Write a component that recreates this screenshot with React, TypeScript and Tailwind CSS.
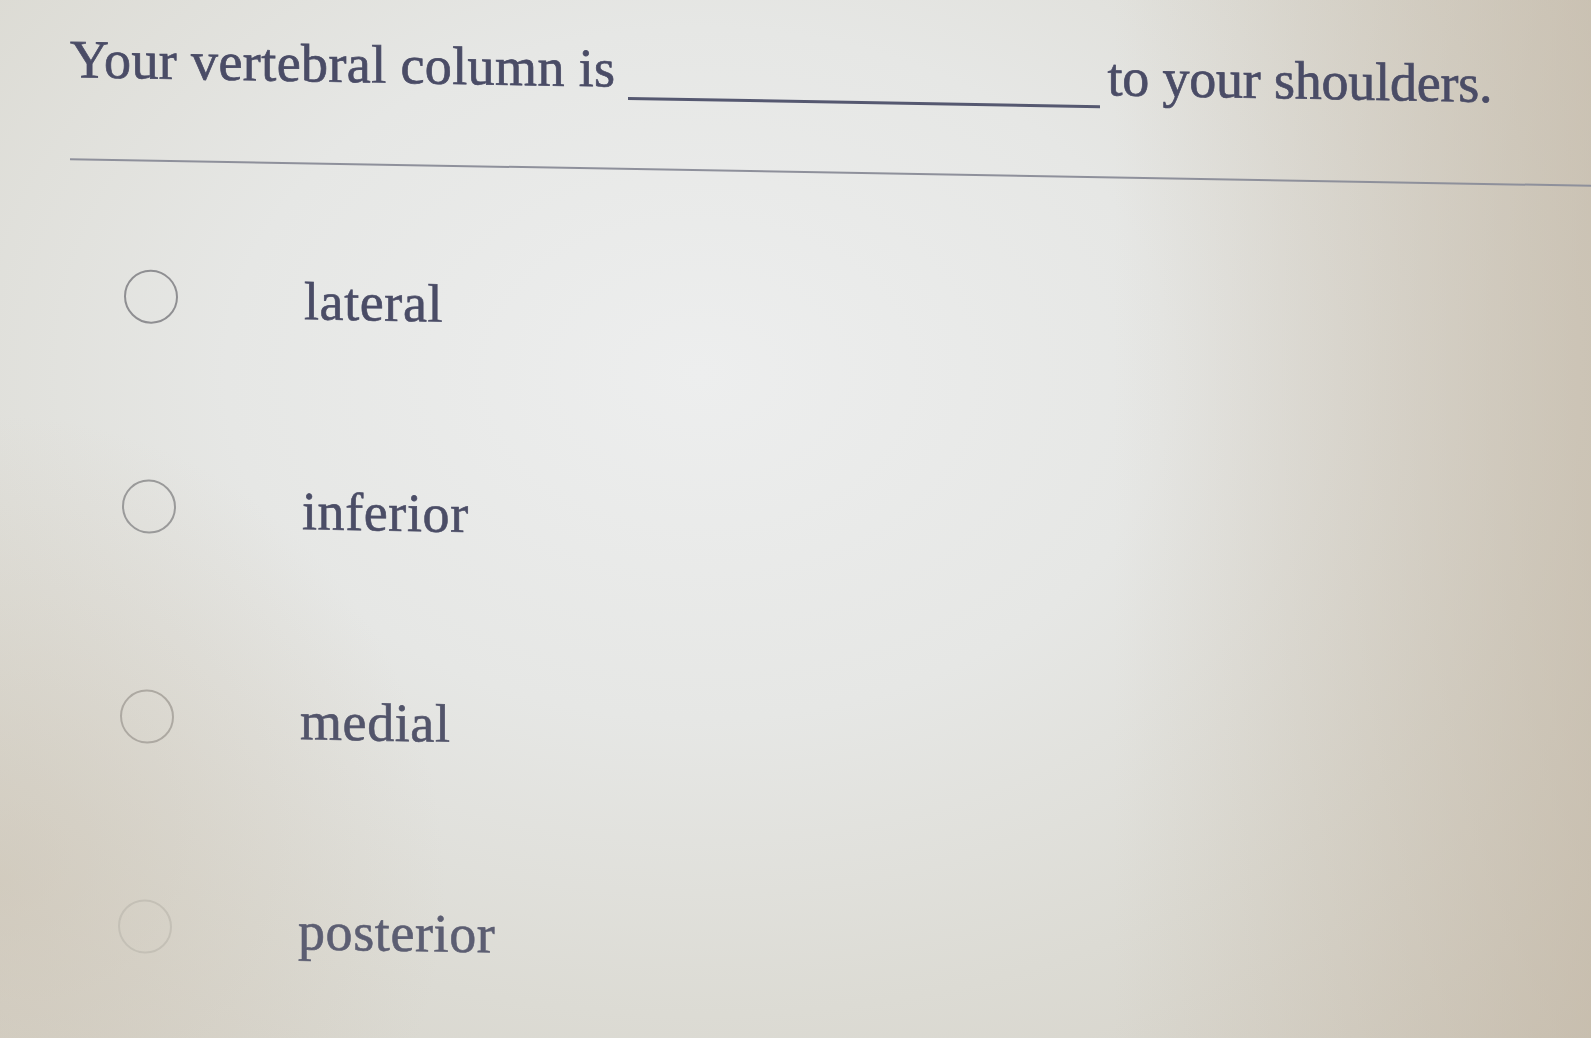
import React from "react";

const options = [
  { label: "lateral", pad: "pl-[124px]", ring: "border-[#8f8f92]", text: "text-[#4a4c66]" },
  { label: "inferior", pad: "pl-[122px]", ring: "border-[#9a9a9a]", text: "text-[#4b4d66]" },
  { label: "medial", pad: "pl-[120px]", ring: "border-[#ada9a2]", text: "text-[#52546a]" },
  { label: "posterior", pad: "pl-[118px]", ring: "border-[#c4c0b6]", text: "text-[#5c5e72]" },
];

export default function App() {
  return (
    <div
      className="h-[1038px] w-full overflow-hidden bg-[radial-gradient(ellipse_28%_45%_at_0%_85%,rgba(200,188,170,0.45)_0%,rgba(0,0,0,0)_100%),linear-gradient(90deg,rgba(0,0,0,0)_0%,rgba(0,0,0,0)_70%,rgba(190,176,156,0.55)_100%),radial-gradient(ellipse_85%_95%_at_44%_36%,#edeeee_0%,#e6e7e5_35%,#dcdbd4_65%,#d2cdc2_100%)]"
      style={{ fontFamily: '"Liberation Serif", "Times New Roman", serif' }}
    >
      <div className="origin-top-left skew-y-[1deg] pt-[31px]">
        <div className="h-[61px] whitespace-nowrap pl-[70px] text-[54px] leading-none text-[#4a4c66] [-webkit-text-stroke:0.7px_#4a4c66]">
          <span className="tracking-[0.4px]">Your vertebral column is</span>
          <span className="ml-[12px] mr-[8px] inline-block h-[13px] w-[472px] border-b-[3px] border-[#555870] align-[-13px] [-webkit-text-stroke:0]" />
          <span className="tracking-[-0.2px]">to your shoulders.</span>
        </div>
        <div className="ml-[70px] mt-[65px] h-[2px] bg-[#8e909b]" />
        <div className="mt-[108px] flex flex-col gap-[156px]">
          {options.map((o) => (
            <div key={o.label} className={`flex h-[54px] items-center gap-[126px] ${o.pad}`}>
              <div className={`h-[54px] w-[54px] shrink-0 rounded-full border-2 ${o.ring}`} />
              <span className={`mt-[4px] text-[54px] leading-none tracking-[0.6px] [-webkit-text-stroke:0.6px_currentColor] ${o.text}`}>{o.label}</span>
            </div>
          ))}
        </div>
      </div>
    </div>
  );
}
